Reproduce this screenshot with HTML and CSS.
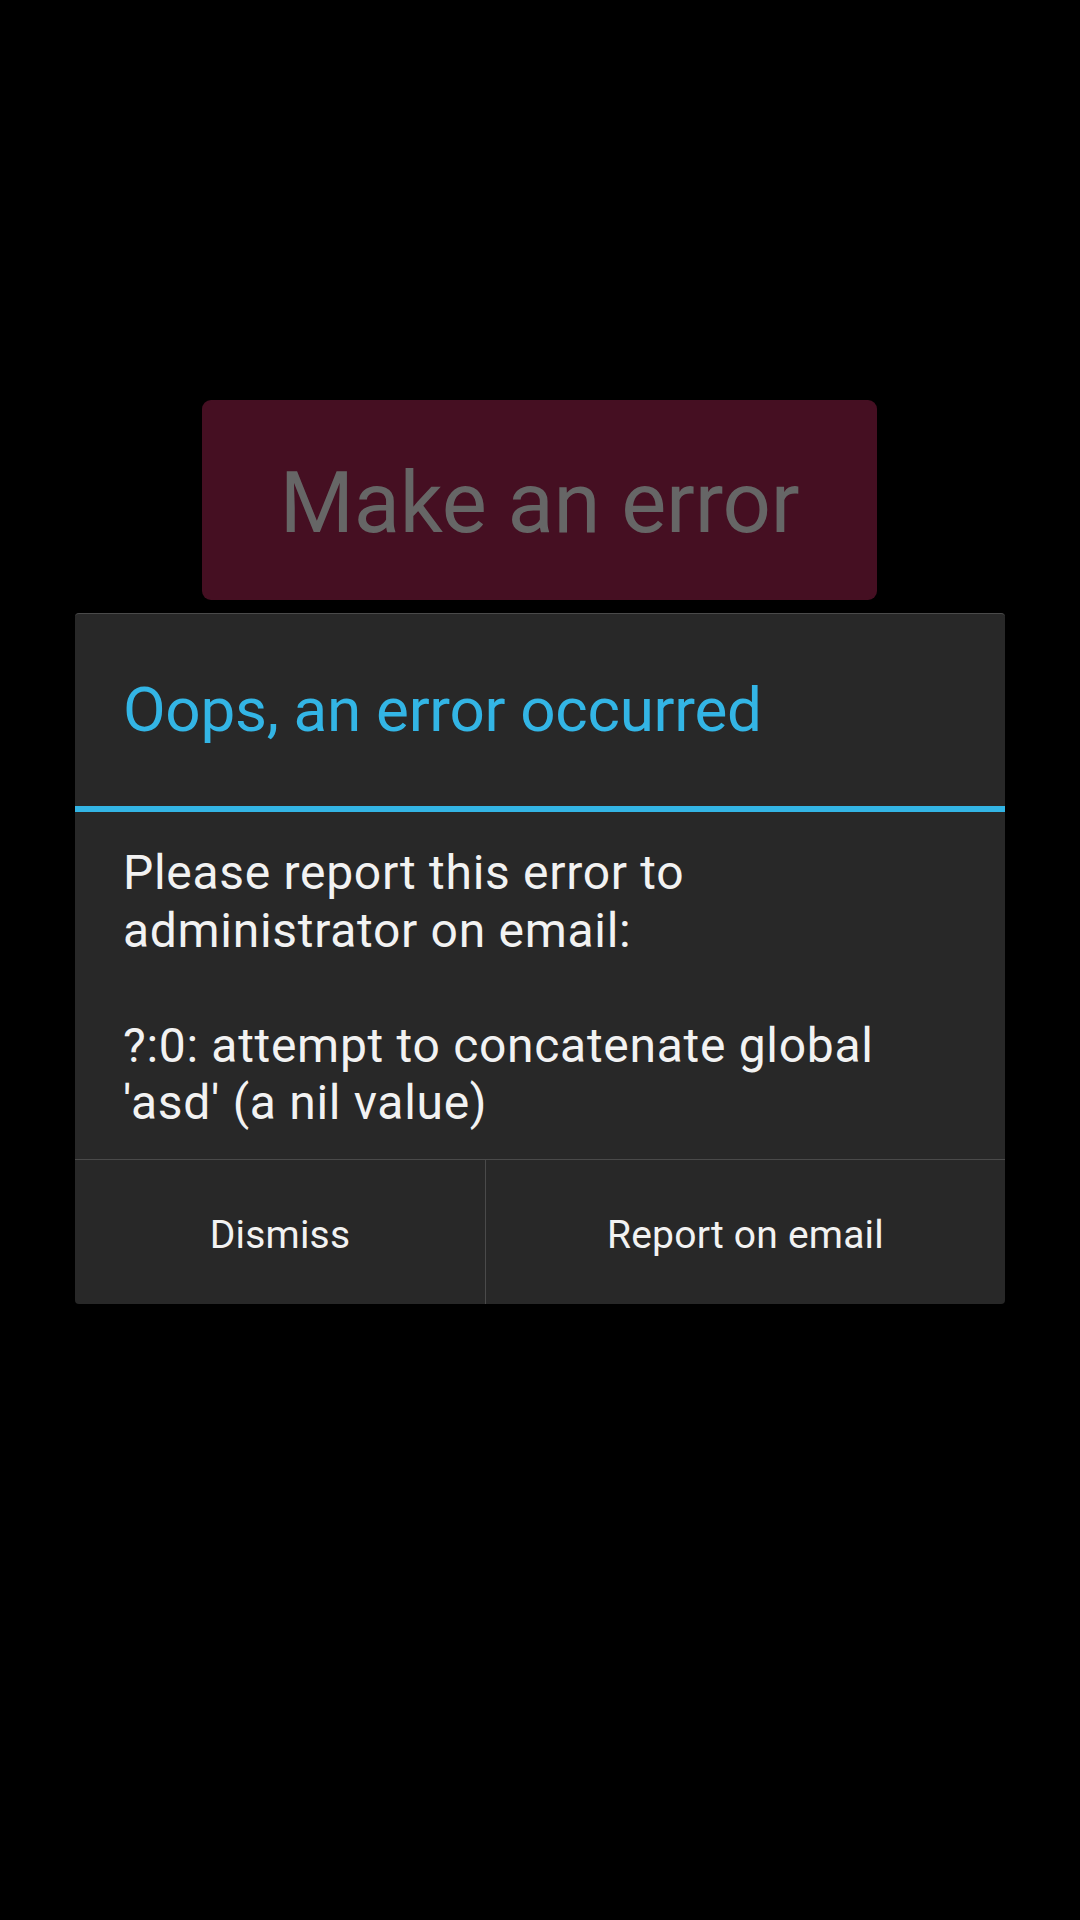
FILE: index.html
```html
<!DOCTYPE html>
<html>
<head>
<meta charset="utf-8">
<link rel="stylesheet" href="styles.css">
</head>
<body>
<div class="screen">
  <div class="make-btn">Make an error</div>
  <div class="dialog">
    <div class="dialog-title">Oops, an error occurred</div>
    <div class="dialog-body">Please report this error to<br>administrator on email:<br><br>?:0: attempt to concatenate global<br>'asd' (a nil value)</div>
    <div class="dialog-actions">
      <div class="action action-left">Dismiss</div>
      <div class="action">Report on email</div>
    </div>
  </div>
</div>
</body>
</html>
```
FILE: styles.css
```css
html, body {
  margin: 0;
  padding: 0;
  background: #000;
}
body {
  width: 1080px;
  height: 1920px;
  font-family: Roboto, "Noto Sans", sans-serif;
  overflow: hidden;
}
.screen {
  display: flex;
  flex-direction: column;
  padding-top: 400px;
}
.make-btn {
  margin-left: 202px;
  width: 675px;
  height: 200px;
  box-sizing: border-box;
  background: #450f22;
  border-radius: 9px;
  color: #666666;
  font-size: 85px;
  letter-spacing: -0.2px;
  display: flex;
  align-items: center;
  justify-content: center;
  padding-top: 5px;
}
.dialog {
  margin-top: 13px;
  margin-left: 75px;
  width: 930px;
  background: #282828;
  border-radius: 4px;
  border-top: 1px solid #4a4a4a;
  box-sizing: border-box;
  display: flex;
  flex-direction: column;
}
.dialog-title {
  display: flex;
  align-items: center;
  padding-left: 48px;
  color: #33b5e5;
  font-size: 62px;
  letter-spacing: -0.3px;
  border-bottom: 6px solid #33b5e5;
  padding-bottom: 2px;
  box-sizing: border-box;
  height: 198px;
}
.dialog-body {
  padding: 32px 48px 27px 48px;
  color: #f2f2f2;
  font-size: 48px;
  letter-spacing: 0.7px;
  line-height: 57.5px;
}
.dialog-actions {
  display: flex;
  border-top: 1px solid #4a4a4a;
  height: 144px;
}
.action {
  flex: 1 1 0;
  display: flex;
  align-items: center;
  justify-content: center;
  color: #f2f2f2;
  font-size: 39px;
  letter-spacing: 0.2px;
  padding-top: 6px;
}
.action-left {
  flex: 0 0 410px;
  border-right: 1px solid #4a4a4a;
}
```
